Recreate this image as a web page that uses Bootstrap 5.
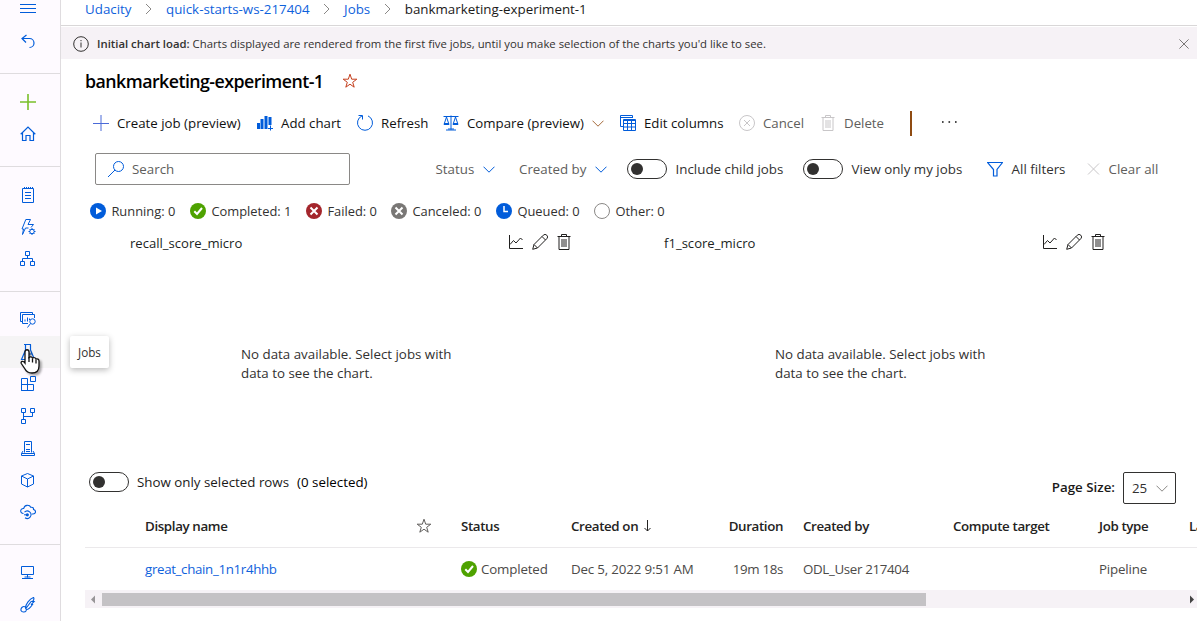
<!DOCTYPE html>
<html lang="en">
<head>
<meta charset="utf-8">
<title>bankmarketing-experiment-1</title>
<link href="https://cdn.jsdelivr.net/npm/bootstrap@5.3.0/dist/css/bootstrap.min.css" rel="stylesheet">
<style>
:root{--az:#015cda;--ink:#323130;--line:#dfdcdf}
html,body{height:100%;overflow:hidden}
body{font:13.33px/20px "Open Sans","Noto Sans",sans-serif;color:#1b1a19;background:#fff}
a{color:#0f62dc;text-decoration:none}
svg{display:block;flex:none;fill:none;stroke:currentColor;stroke-width:1}
.i16{width:16px;height:16px}
.chev{width:12px;height:7px}
.side{width:61px;background:#fefaff;border-right:1px solid var(--line);color:var(--az)}
.side section{border-bottom:1px solid var(--line);padding:12px 0 16px}
.side section:last-child{border:0}
.side section:first-child{height:74px;padding:0}
.side a{display:flex;height:32px;align-items:center;padding-left:20px;color:var(--az)}
.side a.menu-btn{height:26px;align-items:flex-start}
.side a.current{background:#f5f4f5}
.add-icon{color:#7ac02a;stroke-width:1.6}
.page{min-width:0}
.crumbs{height:26px;border-bottom:1px solid #d9d7d8;padding:0 0 7px 24px;font-size:13.35px}
.crumbs svg{width:7px;height:12px;margin:0 14px 0 13.5px;color:#8a8886}
.notice{height:32px;margin-top:1px;padding:1px 8px 0 12px;background:#f6f2f6;font-size:11.34px;color:var(--ink)}
.title{height:45px;padding:0 0 1px 24px;font-size:17.8px;letter-spacing:-.54px;color:#000}
.title svg{color:#c43e1c;margin-left:19px}
.fw-semibold{font-weight:600}
.tools,.filters,.states,.plots{display:grid;align-items:center;white-space:nowrap}
.tools{height:38px;padding-left:32px;grid-template-columns:164px 100px 86px 177px 119px 81px 90px 32px 20px;font-size:13.28px;color:#111}
.tools>span,.filters>span,.states>span{display:flex;align-items:center;gap:8px}
.dim{color:#605e5c}.dim svg{color:#c8c6c8}
.blue,.dim .blue{color:var(--az)}
.filters{height:54px;padding-left:34px;grid-template-columns:340.5px 83.5px 108px 176px 184px 100px 90px;color:var(--ink)}
.filters>span{gap:8.6px}
.search{width:255px;height:32px;border:1px solid #8a8886;border-radius:2px;padding-left:12px;color:#605e5c}
.tog{width:40px;height:20px;border:1px solid var(--ink);border-radius:10px;padding:3px;flex:none}
.tog::before{content:"";display:block;width:12px;height:12px;border-radius:50%;background:var(--ink)}
.states{height:30px;padding-left:29px;grid-template-columns:100px 116px 85px 105px 98px 80px;font-size:12.9px;color:var(--ink)}
.states>span{gap:5.4px}
.plots{grid-template-columns:534px 534px;height:228px;align-items:start;color:var(--ink)}
.plot-head{height:20px;margin-top:6px;padding:0 23px 0 69px;font-size:13.1px;color:#201f1e}
.plot-head span{padding-top:1px}
.plot-empty{margin:93px 0 0 180px;line-height:19px}
.grid-bar{height:51px;padding:18px 21px 0 28px}
.pick{width:53px;height:32px;border:1px solid var(--ink);border-radius:2px;padding:0 7px 0 8px;color:var(--ink)}
.jobs{margin-left:24px;width:1160px;table-layout:fixed;color:#4c4a48;letter-spacing:-.17px}
.jobs th,.jobs td{padding:0;height:42px;white-space:nowrap;vertical-align:middle}
.jobs td{height:43px;padding-top:1px}
.jobs th{font-weight:600;color:#242322;letter-spacing:-.37px}
.jobs tr:first-child th{border-bottom:1px solid #ebe9eb}
.jobs .num{text-align:right;padding-right:20px}
.jobs .tight{letter-spacing:-.34px}
.jobs .fav{margin-left:-1px;color:#605e5c}
.hbar{margin-left:24px;height:18px;background:#f6f2f6}
.thumb{width:824px;height:13px;background:#c4c2c5}
.tip{position:absolute;left:70px;top:336px;width:39px;height:32px;background:#fff;border-radius:2px;box-shadow:0 2px 6px rgba(0,0,0,.28);font-size:11.7px;color:var(--ink)}
.hand{position:absolute;left:19px;top:348px;width:28px;height:30px;filter:drop-shadow(2px 2px 1px rgba(0,0,0,.35))}
</style>
</head>
<body class="d-flex">
<svg width="0" height="0" class="position-absolute">
<symbol id="chev" viewBox="0 0 12 7"><path d="M.5 .7 6 6.2 11.5 .7"/></symbol>
<symbol id="right" viewBox="0 0 7 12"><path d="M1 1l5 5-5 5"/></symbol>
<symbol id="plus" viewBox="0 0 16 16"><path d="M8 0V16M0 8.5H16"/></symbol>
<symbol id="star" viewBox="0 0 16 16"><path d="M8 1.200 9.700 6.200H14.800L10.700 9.300 12.200 14.200 8 11.200 3.800 14.200 5.300 9.300 1.200 6.200H6.300Z"/></symbol>
<symbol id="x" viewBox="0 0 12 12"><path d="M.5 .5l11 11M11.5 .5l-11 11"/></symbol>
<symbol id="bin" viewBox="0 0 16 16"><path d="M1.500 2.500h13M5.500 2.500v-2h5v2M3 2.500v13h10v-13M6 5v8M8 5v8M10 5v8"/></symbol>
<symbol id="line" viewBox="0 0 16 16"><path d="M1.500 1v13.500H15M2 10.500l3.500-4 2.500 2.500 4.500-5 2 2"/></symbol>
<symbol id="pen" viewBox="0 0 16 16"><path d="M.7 15.300 2 10.500 11.300 1.200a2.300 2.300 0 0 1 3.500 3.500L5.500 14ZM2 10.500 5.500 14M10 2.500 13.500 6"/></symbol>
<symbol id="ok" viewBox="0 0 16 16"><circle cx="8" cy="8" r="8" fill="#4ea200" stroke="none"/><path d="M4.300 8.300 7 11l5-6" stroke="#fff" stroke-width="2"/></symbol>
<symbol id="no" viewBox="0 0 16 16"><circle cx="8" cy="8" r="8" fill="currentColor" stroke="none"/><path d="M4.500 4.500l7 7M11.500 4.500l-7 7" stroke="#fff" stroke-width="2"/></symbol>
</svg>

<nav class="side flex-shrink-0">
<section>
<a href="#" class="menu-btn"><svg class="i16" viewBox="0 0 16 16"><path d="M0 4.500h16M0 8.500h16M0 12.500h16"/></svg></a>
<a href="#"><svg class="i16" viewBox="0 0 16 16"><path d="M6.500 1 2 4.500l4 4M2 4.500h7.500a4 4 0 0 1 0 9" stroke-width="1.200"/></svg></a>
</section>
<section>
<a href="#"><svg class="i16 add-icon" viewBox="0 0 16 16"><path d="M8 0v16M0 8h16"/></svg></a>
<a href="#"><svg class="i16" viewBox="0 0 16 16"><path d="M.7 8.200 8 1l7.300 7.200M2.500 6.500v8h3.500V9.500h4v5h3.500v-8" stroke-width="1.200"/></svg></a>
</section>
<section>
<a href="#"><svg class="i16" viewBox="0 0 16 16"><path d="M2.500 1.500h11v14h-11ZM4.500 0v2M6.500 0v2M8.500 0v2M10.500 0v2M12.500 0v2M5 5.500h6M5 8.500h6M5 11.500h6"/></svg></a>
<a href="#"><svg class="i16" viewBox="0 0 16 16"><path d="M8.500 9H5.500l-3 6.500 1-5.500H2L5.800 .5h4.700L8 5.500h5.500L11 8.500"/><circle cx="12" cy="12.500" r="2.200"/><path d="M12 9v1.500M12 14.500v1.500M8.500 12.500h1.500M14 12.500h1.500M9.500 10l1 1M13.500 14l1 1M14.500 10l-1 1M10.500 14l-1 1"/></svg></a>
<a href="#"><svg class="i16" viewBox="0 0 16 16"><path d="M5.500 .5h4v4h-4ZM.5 10.500h4v4h-4ZM10.500 10.500h4v4h-4ZM7.500 4.500v3M2.500 10.500v-3h10v3"/></svg></a>
</section>
<section>
<a href="#"><svg class="i16" viewBox="0 0 16 16"><path d="M2 9.500H.5v-9h12v2M8 11.500H2.500v-9h12V6M5 9.500v-2M7.500 9.500v-4M9.500 8V6.500"/><circle cx="12.500" cy="9.500" r="2.700"/><path d="M10.500 11.500 7.500 15.500"/></svg></a>
<a href="#" class="current"><svg class="i16" viewBox="0 0 16 16"><path d="M4 .5h7M5.500 .5V6L1.500 15.500h13L10.500 6V.5M4 10h8" stroke-width="1.200"/></svg></a>
<a href="#"><svg class="i16" viewBox="0 0 16 16"><path d="M1.500 2.500h6v12h-6ZM1.500 8.500h12v6h-12ZM10.500 .5h5v5h-5Z"/></svg></a>
<a href="#"><svg class="i16" viewBox="0 0 16 16"><path d="M1.500 .5h4v4h-4ZM10.500 .5h4v4h-4ZM1.500 11.500h4v4h-4ZM3.500 4.500v7M3.500 8.500h9v-4"/></svg></a>
<a href="#"><svg class="i16" viewBox="0 0 16 16"><path d="M4.500 12.500V1.500h7v11M6 4.500h4M6 9.500h4M3 11 1.500 13.500v2h13v-2L13 11M1.500 13.500h13M6 11.500h4"/></svg></a>
<a href="#"><svg class="i16" viewBox="0 0 16 16"><path d="M7.500 1.500l6 2.500v8l-6 3-6-3V4ZM1.500 4l6 3 6-3M7.500 7v8"/></svg></a>
<a href="#"><svg class="i16" viewBox="0 0 16 16"><path d="M3.500 9.500C-.5 9.500 0 4 3.700 4.500 4.500 .5 9.500 .5 10.800 3.300 13 3 13.700 4 13.500 5.500 16.500 6.500 16 10 13 10H12M4.500 8.200A3.700 3.700 0 1 1 5 13.700" stroke-width="1.100"/><path d="M4 10.800h3"/><circle cx="7.300" cy="10.800" r="1.600" fill="currentColor" stroke="none"/></svg></a>
</section>
<section>
<a href="#"><svg class="i16" viewBox="0 0 16 16"><path d="M1.500 1.500h12v8h-12ZM7.500 9.500v3M2 13.500h11M4.500 12h6"/></svg></a>
<a href="#"><svg class="i16" viewBox="0 0 16 16"><path d="M5.500 11c0-4 4-9 8-10.500 1 1 0 3-1 4h1.500c-1 1-2 2.500-3 3h1.500c-2 3-4 5-6 5ZM5.500 12 11.500 4M5.500 10C3 8.500 .5 11 1 13.500c1 2 4 2 5 .5l.5-2" stroke-width="1.100"/></svg></a>
</section>
</nav>

<main class="page flex-grow-1">
<nav class="crumbs d-flex align-items-center">
<a href="#">Udacity</a><svg><use href="#right"/></svg><a href="#">quick-starts-ws-217404</a><svg><use href="#right"/></svg><a href="#">Jobs</a><svg><use href="#right"/></svg><span>bankmarketing-experiment-1</span>
</nav>
<div class="notice d-flex align-items-center">
<svg class="i16 me-2" viewBox="0 0 16 16"><circle cx="8" cy="8" r="7.300"/><path d="M8 6.500v5M8 4v1.200"/></svg>
<span><span class="fw-semibold">Initial chart load:</span> Charts displayed are rendered from the first five jobs, until you make selection of the charts you'd like to see.</span>
<svg class="ms-auto dim" width="10" height="10"><use href="#x"/></svg>
</div>
<div class="title d-flex align-items-center"><span class="fw-semibold">bankmarketing-experiment-1</span><svg class="i16"><use href="#star"/></svg></div>

<div class="tools">
<span><svg class="i16" style="color:#4a6ad8"><use href="#plus"/></svg>Create job (preview)</span>
<span><svg class="i16 blue" viewBox="0 0 16 16"><path d="M1.500 8v6M5 4v10M9 1v13M13 2v8" stroke-width="3"/><path d="M13.500 10.500v5M11 13.500h5"/></svg>Add chart</span>
<span><svg class="i16 blue" viewBox="0 0 16 16"><path d="M11 .9a7.500 7.500 0 1 1-6 0M1.500 .5h4v4"/></svg>Refresh</span>
<span><svg class="i16 blue" viewBox="0 0 16 16"><path d="M.5 1.500h15M8 .5v14M3 15h10M5 14h6M3.500 2 1 9.500h5ZM12.500 2 10 9.500h5Z"/><path d="M1 9h5M10 9h5" stroke-width="2"/></svg>Compare (preview)<svg class="chev" style="color:#a66b3c"><use href="#chev"/></svg></span>
<span><svg class="i16 blue" viewBox="0 0 16 16"><path d="M3 11.500H.5V.5h12V3M.5 2.500h12M3.500 4.500h12v11h-12ZM3.500 5.500h12M3.500 8.500h12M3.500 12h12M7.500 5v10M11.500 5v10"/></svg>Edit columns</span>
<span class="dim"><svg class="i16" viewBox="0 0 16 16"><circle cx="8" cy="8" r="7.500"/><path d="M5 5l6 6M11 5l-6 6"/></svg>Cancel</span>
<span class="dim"><svg class="i16"><use href="#bin"/></svg>Delete</span>
<span><svg width="2" height="25" viewBox="0 0 2 25"><path d="M1 0v25" stroke="#8f4b12" stroke-width="2"/></svg></span>
<span><svg class="i16" viewBox="0 0 16 16"><path d="M0 7h1.600M6.500 7h1.600M13 7h1.600" stroke-width="1.600"/></svg></span>
</div>

<div class="filters">
<div class="search d-flex align-items-center gap-2"><svg class="i16 blue" viewBox="0 0 16 16"><circle cx="10.500" cy="5.500" r="5"/><path d="M7 9 0 16"/></svg>Search</div>
<span class="dim">Status<svg class="chev blue"><use href="#chev"/></svg></span>
<span class="dim">Created by<svg class="chev blue"><use href="#chev"/></svg></span>
<span><i class="tog"></i>Include child jobs</span>
<span><i class="tog"></i>View only my jobs</span>
<span><svg class="i16 blue" viewBox="0 0 16 16"><path d="M.5 1.500h15l-5.500 7v6.500H6.500V8.500Z" stroke-width="1.200"/></svg>All filters</span>
<span class="dim"><svg width="13" height="12"><use href="#x"/></svg>Clear all</span>
</div>

<div class="states">
<span><svg class="i16" viewBox="0 0 16 16"><circle cx="8" cy="8" r="8" fill="#015cda" stroke="none"/><path d="M6 4.500v7L12 8Z" fill="#fff" stroke="none"/></svg>Running: 0</span>
<span><svg class="i16"><use href="#ok"/></svg>Completed: 1</span>
<span><svg class="i16" style="color:#a4262c"><use href="#no"/></svg>Failed: 0</span>
<span><svg class="i16" style="color:#797775"><use href="#no"/></svg>Canceled: 0</span>
<span><svg class="i16" viewBox="0 0 16 16"><circle cx="8" cy="8" r="8" fill="#015cda" stroke="none"/><path d="M8 3v5.500h4" stroke="#fff" stroke-width="1.500"/></svg>Queued: 0</span>
<span><svg class="i16" viewBox="0 0 16 16"><circle cx="8" cy="8" r="7.500" stroke="#8a8886"/></svg>Other: 0</span>
</div>

<div class="plots">
<div><div class="plot-head d-flex align-items-center"><span class="me-auto">recall_score_micro</span><svg class="i16 me-2"><use href="#line"/></svg><svg class="i16 me-2"><use href="#pen"/></svg><svg class="i16"><use href="#bin"/></svg></div>
<div class="plot-empty">No data available. Select jobs with<br>data to see the chart.</div></div>
<div><div class="plot-head d-flex align-items-center"><span class="me-auto">f1_score_micro</span><svg class="i16 me-2"><use href="#line"/></svg><svg class="i16 me-2"><use href="#pen"/></svg><svg class="i16"><use href="#bin"/></svg></div>
<div class="plot-empty">No data available. Select jobs with<br>data to see the chart.</div></div>
</div>

<div class="grid-bar d-flex align-items-start">
<div class="d-flex align-items-center gap-2"><i class="tog"></i><span>Show only selected rows</span><span class="text-black">(0 selected)</span></div>
<div class="ms-auto d-flex align-items-center gap-2"><span class="fw-semibold" style="padding-bottom:2px">Page Size:</span><div class="pick d-flex align-items-center justify-content-between">25<svg class="chev" style="color:#8a8886"><use href="#chev"/></svg></div></div>
</div>

<table class="jobs">
<colgroup><col style="width:60px"><col style="width:272px"><col style="width:44px"><col style="width:110px"><col style="width:130px"><col style="width:102px"><col style="width:150px"><col style="width:146px"><col style="width:90px"><col></colgroup>
<tr><th></th><th>Display name</th><th><svg class="i16 fav"><use href="#star"/></svg></th><th>Status</th><th><span class="d-flex align-items-center">Created on<svg width="8" height="12" style="margin-left:6px" viewBox="0 0 8 12"><path d="M3.500 0v11M.5 8l3 3 3-3"/></svg></span></th><th class="num">Duration</th><th>Created by</th><th>Compute target</th><th>Job type</th><th>Latest</th></tr>
<tr><td></td><td><a href="#" class="tight">great_chain_1n1r4hhb</a></td><td></td><td><span class="d-flex align-items-center"><svg class="i16 me-1"><use href="#ok"/></svg>Completed</span></td><td>Dec 5, 2022 9:51 AM</td><td class="num tight">19m 18s</td><td class="tight">ODL_User 217404</td><td></td><td>Pipeline</td><td></td></tr>
</table>
<div class="hbar d-flex align-items-center"><svg width="17" height="9" viewBox="0 0 17 9"><path d="M10 .5v8l-4-4Z" fill="#979597" stroke="none"/></svg><div class="thumb"></div><svg class="ms-auto" width="8" height="9" viewBox="0 0 8 9"><path d="M1 .5v8l4-4Z" fill="#444" stroke="none"/></svg></div>
</main>

<div class="tip d-flex align-items-center justify-content-center">Jobs</div>
<svg class="hand" viewBox="0 0 28 30"><path d="M6 4c0-3 4-3 4 0v5.500c1-1 3-.7 3.500 .5 1.500-.8 3-.2 3.500 1 1.500-.5 3 .3 3 2v5c0 4-2 7-7 7-4 0-6-2-7-4l-3.700-5.500c-1-2 1.500-3.300 3.700-.5Z" fill="#fff" stroke="#111" stroke-width="1.300"/><path d="M10 9v5M13.500 10.500v4M17 11.500v4" stroke="#111" stroke-width="1.300"/></svg>
<script src="https://cdn.jsdelivr.net/npm/bootstrap@5.3.0/dist/js/bootstrap.bundle.min.js"></script>
</body>
</html>
